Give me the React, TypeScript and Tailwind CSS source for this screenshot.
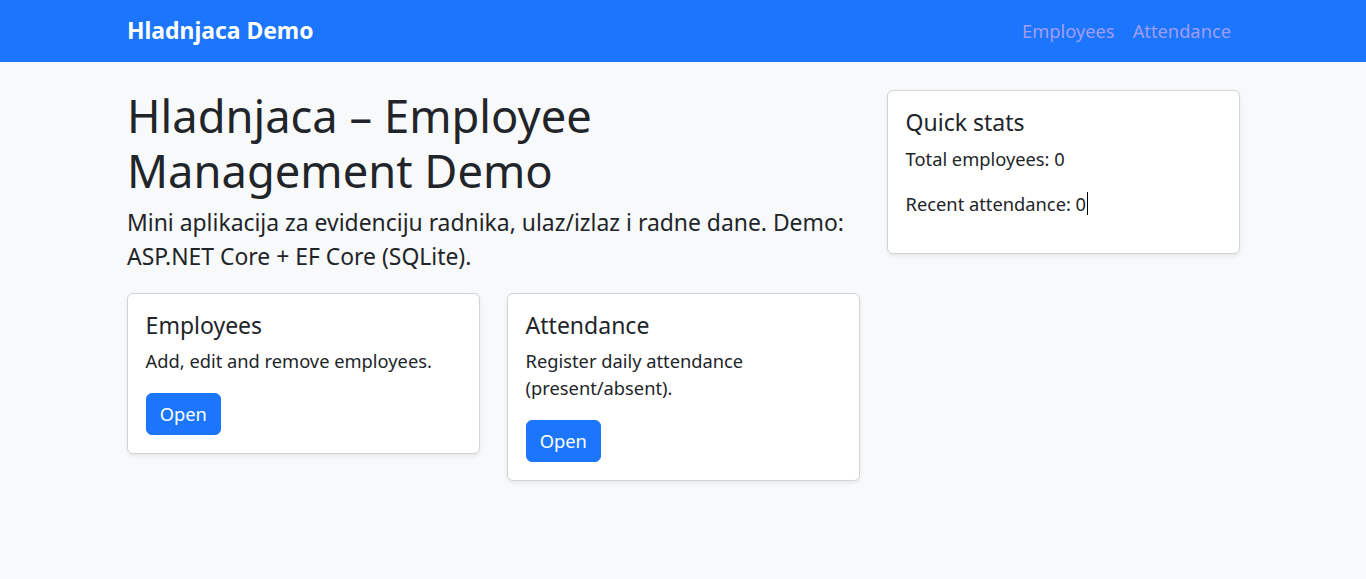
export default function App() {
  const font = { fontFamily: '"Noto Sans", system-ui, sans-serif' };
  return (
    <div className="min-h-[579px] bg-[#f8f9fa] text-[#212529]" style={font}>
      <nav className="bg-[#1b76fd] py-[8.8px]">
        <div className="mx-auto flex w-[1140px] items-center justify-between pl-[14px] pr-[13.2px]">
          <a className="py-[5.3px] text-[22.9px] font-bold leading-[33px] text-white">Hladnjaca Demo</a>
          <div className="flex">
            <a className="px-[9px] py-[8.8px] text-[18.3px] leading-[26.4px] text-[#a09cf2]">Employees</a>
            <a className="pl-[9px] pr-[8.8px] py-[8.8px] text-[18.3px] leading-[26.4px] text-[#a09cf2]">Attendance</a>
          </div>
        </div>
      </nav>
      <main className="mx-auto grid w-[1140px] grid-cols-[760px_380px] pt-[26px]">
        <div className="pl-[14px] pr-[13.2px]">
          <h1 className="m-0 text-[45.3px] font-normal leading-[55px]">Hladnjaca – Employee Management Demo</h1>
          <p className="mb-[19.5px] mt-[8px] text-[22.9px] leading-[34px]">
            Mini aplikacija za evidenciju radnika, ulaz/izlaz i radne dane. Demo: ASP.NET Core + EF Core (SQLite).
          </p>
          <div className="-ml-[14px] -mr-[13.2px] grid grid-cols-2 items-start">
            <div className="pl-[14px] pr-[13.2px]">
              <div className="rounded-[6px] border border-[#d3d4d5] bg-white px-[17.6px] pb-[18.3px] pt-[17.6px] shadow-[0_2px_4px_rgba(0,0,0,0.075)]">
                <h5 className="mb-[8.8px] text-[23px] font-normal leading-[27px]">Employees</h5>
                <p className="mb-[18.6px] text-[18.3px] leading-[27px]">Add, edit and remove employees.</p>
                <button className="rounded-[6px] border border-[#1b76fd] bg-[#1b76fd] px-[13.2px] py-[6.6px] text-[18.3px] leading-[26.4px] text-white">
                  Open
                </button>
              </div>
            </div>
            <div className="pl-[14px] pr-[13.2px]">
              <div className="rounded-[6px] border border-[#d3d4d5] bg-white px-[17.6px] pb-[18.3px] pt-[17.6px] shadow-[0_2px_4px_rgba(0,0,0,0.075)]">
                <h5 className="mb-[8.8px] text-[23px] font-normal leading-[27px]">Attendance</h5>
                <p className="mb-[18.6px] text-[18.3px] leading-[27px]">Register daily attendance (present/absent).</p>
                <button className="rounded-[6px] border border-[#1b76fd] bg-[#1b76fd] px-[13.2px] py-[6.6px] text-[18.3px] leading-[26.4px] text-white">
                  Open
                </button>
              </div>
            </div>
          </div>
        </div>
        <div className="pl-[14px] pr-[13px] pt-[2px]">
          <div className="rounded-[6px] border border-[#d3d4d5] bg-white px-[17.6px] pb-[17.6px] pt-[18.6px] shadow-[0_2px_4px_rgba(0,0,0,0.075)]">
            <h5 className="mb-[8.8px] text-[23px] font-normal leading-[27px]">Quick stats</h5>
            <p className="mb-[18px] text-[18.3px] leading-[27px]">Total employees: 0</p>
            <p className="mb-[18.6px] flex items-center text-[18.3px] leading-[27px]">
              Recent attendance: 0<span className="ml-px inline-block h-[23px] w-px bg-black"></span>
            </p>
          </div>
        </div>
      </main>
    </div>
  );
}
